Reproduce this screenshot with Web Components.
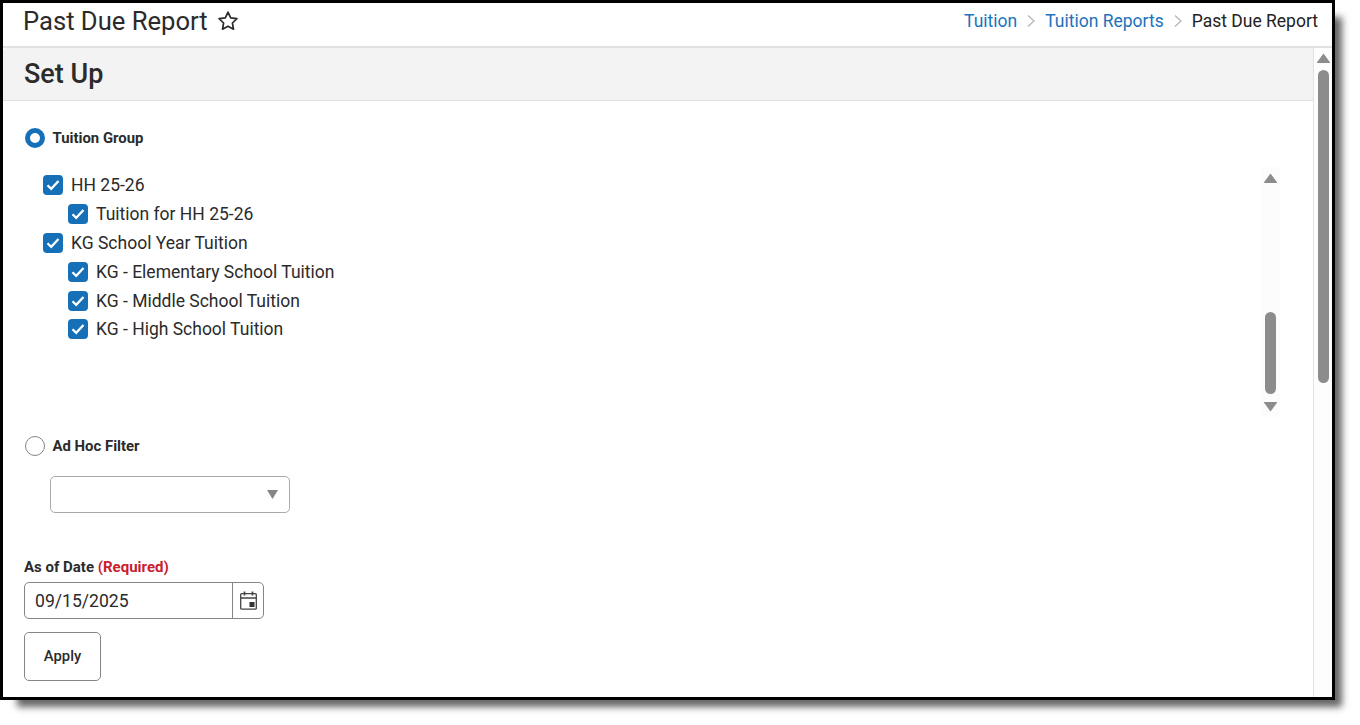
<!DOCTYPE html>
<html>
<head>
<meta charset="utf-8">
<title>Past Due Report</title>
<style>
  html, body { margin: 0; padding: 0; background: #fff; }
  body { min-height: 725px; font-family: Roboto, "Liberation Sans", sans-serif; color: #222; }
</style>
</head>
<body>
<report-frame>
  <page-header slot="header" title-text="Past Due Report">
    <a href="#">Tuition</a>
    <a href="#">Tuition Reports</a>
    <span>Past Due Report</span>
  </page-header>
  <setup-panel slot="main"></setup-panel>
  <scroll-bar slot="scroll" thumb-top="7" thumb-height="313" pad-top="5" track="#fdfdfd"></scroll-bar>
</report-frame>

<script>
// small helper, every component sets its shadow the same way
function mount(el, html) {
    const shadow = el.attachShadow({ mode: 'open' });
    shadow.innerHTML = html;
    return shadow;
}

class ReportFrame extends HTMLElement {
    constructor() {
        super();
        mount(this, `
        <style>
          :host {
            display: flex;
            flex-direction: column;
            box-sizing: border-box;
            width: 1335px;
            height: 700px;
            border: 3px solid #000;
            background: #fff;
            box-shadow: 12px 12px 7px -5px #666;
            overflow: hidden;
          }
          .body {
            display: flex;
            flex: 1;
            min-height: 0;
          }
          .main { flex: 1; min-width: 0; display: flex; border-right: 1px solid #e2e2e2; }
          .scroll { width: 18px; display: flex; }
        </style>
        <slot name="header"></slot>
        <div class="body">
          <div class="main"><slot name="main"></slot></div>
          <div class="scroll"><slot name="scroll"></slot></div>
        </div>
      `);
    }
}

class PageHeader extends HTMLElement {
    constructor() {
        super();
        const title = this.getAttribute('title-text') || '';
        mount(this, `
        <style>
          :host {
            display: flex;
            align-items: center;
            justify-content: space-between;
            box-sizing: border-box;
            height: 45px;
            padding: 0 14px 7px 20px;
            border-bottom: 2px solid #e1e1e1;
          }
          .title { display: flex; align-items: center; gap: 9px; font-size: 25.6px; line-height: 36px; color: #2b2b2b; }
          .title svg { display: block; }
          nav { display: flex; align-items: center; font-size: 17.5px; color: #222; }
          ::slotted(a) { color: #1a73bc; text-decoration: none; }
          .sep { display: flex; width: 28px; justify-content: center; }
        </style>
        <div class="title">
          <span>${title}</span>
          <svg width="22" height="22" viewBox="0 0 22 22" fill="none" stroke="#2b2b2b" stroke-width="1.7" stroke-linejoin="round">
            <path d="M11 2.2l2.7 5.7 6.2.8-4.5 4.3 1.1 6.2L11 16.2l-5.5 3 1.1-6.2-4.5-4.3 6.2-.8z"/>
          </svg>
        </div>
        <nav>
          <slot></slot>
        </nav>
      `);
        // separators go between the slotted crumbs
        const nav = this.shadowRoot.querySelector('nav');
        nav.innerHTML = '';
        [...this.children].forEach((crumb, i) => {
            const name = 'c' + i;
            crumb.slot = name;
            if (i > 0) {
                const sep = document.createElement('span');
                sep.className = 'sep';
                sep.innerHTML = '<svg width="8" height="14" viewBox="0 0 8 14" fill="none" stroke="#b9b9b9" stroke-width="1.5"><path d="M1 1.5L7 7l-6 5.5"/></svg>';
                nav.appendChild(sep);
            }
            const s = document.createElement('slot');
            s.name = name;
            nav.appendChild(s);
        });
    }
}

class ScrollBar extends HTMLElement {
    constructor() {
        super();
        const top = this.getAttribute('thumb-top') || 0;
        const h = this.getAttribute('thumb-height') || 50;
        const pad = this.getAttribute('pad-top') || 0;
        const track = this.getAttribute('track') || '#fdfdfd';
        const hasDown = this.hasAttribute('down');
        mount(this, `
        <style>
          :host {
            display: flex;
            flex-direction: column;
            align-items: center;
            box-sizing: border-box;
            width: 100%;
            padding-top: ${pad}px;
            background: ${track};
          }
          svg { display: block; flex: none; }
          .thumb {
            flex: none;
            width: 11px;
            height: ${h}px;
            margin-top: ${top}px;
            background: #8c8c8c;
            border-radius: 6px;
          }
          .down { margin-top: 8px; }
        </style>
        <svg width="13" height="10" viewBox="0 0 13 10"><path d="M6.5.5L13 9.2q.3.8-.6.8H.6q-.9 0-.6-.8z" fill="#8c8c8c"/></svg>
        <div class="thumb"></div>
        ${hasDown ? '<svg class="down" width="13" height="10" viewBox="0 0 13 10"><path d="M.6 0h11.8q.9 0 .6.8L6.5 9.5 0 .8q-.3-.8.6-.8z" fill="#8c8c8c"/></svg>' : ''}
      `);
    }
}

class RadioOption extends HTMLElement {
    constructor() {
        super();
        const on = this.hasAttribute('checked');
        mount(this, `
        <style>
          :host { display: flex; align-items: center; gap: 7.5px; height: 20px; margin-left: 1px; font-size: 14.9px; font-weight: 700; color: #2b2b2b; }
          .dot { box-sizing: border-box; width: 20px; height: 20px; border-radius: 50%; background: #fff; }
          .on { border: 5px solid #1670b8; }
          .off { border: 1px solid #858585; }
        </style>
        <span class="dot ${on ? 'on' : 'off'}"></span>
        <slot></slot>
      `);
    }
}

class TreeCheck extends HTMLElement {
    constructor() {
        super();
        const child = this.hasAttribute('child');
        mount(this, `
        <style>
          :host {
            display: flex;
            align-items: center;
            gap: 8px;
            height: 28.8px;
            padding-left: ${child ? 25 : 0}px;
            font-size: 17.5px;
            color: #2b2b2b;
          }
          .box {
            display: flex;
            align-items: center;
            justify-content: center;
            width: 20px;
            height: 20px;
            background: #1670b8;
            border-radius: 4px;
          }
        </style>
        <span class="box">
          <svg width="14" height="12" viewBox="0 0 14 12" fill="none" stroke="#fff" stroke-width="2.3"><path d="M1.5 6.2l3.7 3.6L12.5 2"/></svg>
        </span>
        <slot></slot>
      `);
    }
}

class SelectBox extends HTMLElement {
    constructor() {
        super();
        mount(this, `
        <style>
          :host {
            display: flex;
            align-items: center;
            justify-content: flex-end;
            box-sizing: border-box;
            width: 240px;
            height: 37px;
            padding-right: 11px;
            border: 1px solid #aaa;
            border-radius: 5px;
            background: #fff;
          }
        </style>
        <svg width="11" height="9" viewBox="0 0 11 9"><path d="M0 0h11L5.5 9z" fill="#858585"/></svg>
      `);
    }
}

class DateField extends HTMLElement {
    constructor() {
        super();
        const value = this.getAttribute('value') || '';
        mount(this, `
        <style>
          :host {
            display: flex;
            box-sizing: border-box;
            width: 240px;
            height: 37px;
            border: 1px solid #858585;
            border-radius: 5px;
            font-size: 17.6px;
            color: #2b2b2b;
          }
          .val { flex: 1; display: flex; align-items: center; padding-left: 10px; }
          .btn { flex: none; box-sizing: border-box; width: 31px; display: flex; align-items: center; justify-content: center; border-left: 1px solid #858585; }
        </style>
        <span class="val">${value}</span>
        <span class="btn">
          <svg width="17" height="19" viewBox="0 0 17 19" fill="none" stroke="#444" stroke-width="1.3">
            <rect x=".7" y="2.6" width="15.6" height="15.6" rx="1"/>
            <path d="M.7 7h15.6" stroke-width="1.5"/>
            <path d="M4.5 .5v4M12.5 .5v4" stroke-width="1.7"/>
            <rect x="9.5" y="11" width="5" height="5" fill="#333" stroke="none"/>
          </svg>
        </span>
      `);
    }
}

class ApplyButton extends HTMLElement {
    constructor() {
        super();
        mount(this, `
        <style>
          :host {
            display: flex;
            align-items: center;
            justify-content: center;
            box-sizing: border-box;
            width: 77px;
            height: 49px;
            padding-bottom: 2px;
            border: 1px solid #858585;
            border-radius: 5px;
            font-size: 14.8px;
            font-weight: 500;
            color: #2b2b2b;
          }
        </style>
        <slot></slot>
      `);
    }
}

class SetupPanel extends HTMLElement {
    constructor() {
        super();
        mount(this, `
        <style>
          :host { display: block; flex: 1; min-width: 0; }
          .head {
            box-sizing: border-box;
            height: 53px;
            padding-left: 21px;
            background: #f3f3f3;
            border-bottom: 1px solid #e1e1e1;
            border-top-left-radius: 4px;
            font-size: 27px;
            font-weight: 500;
            line-height: 53px;
            color: #2b2b2b;
          }
          .content { padding: 27px 33px 0 21px; }
          .tree-wrap { display: flex; justify-content: space-between; height: 250px; margin-top: 19px; }
          .tree { padding: 4px 0 0 19px; }
          .sb { width: 19px; display: flex; }
          .adhoc { margin-top: 19px; }
          select-box { margin: 20px 0 0 26px; }
          .label { margin-top: 46px; font-size: 15px; font-weight: 700; line-height: 17px; color: #2b2b2b; }
          .req { color: #c8202f; }
          date-field { margin-top: 6px; }
          apply-button { margin-top: 13px; }
        </style>
        <div class="head">Set Up</div>
        <div class="content">
          <radio-option checked>Tuition Group</radio-option>
          <div class="tree-wrap">
            <div class="tree">
              <tree-check>HH 25-26</tree-check>
              <tree-check child>Tuition for HH 25-26</tree-check>
              <tree-check>KG School Year Tuition</tree-check>
              <tree-check child>KG - Elementary School Tuition</tree-check>
              <tree-check child>KG - Middle School Tuition</tree-check>
              <tree-check child>KG - High School Tuition</tree-check>
            </div>
            <div class="sb"><scroll-bar down thumb-top="129" thumb-height="82" pad-top="6" track="#fcfcfc"></scroll-bar></div>
          </div>
          <div class="adhoc"><radio-option>Ad Hoc Filter</radio-option></div>
          <select-box></select-box>
          <div class="label">As of Date <span class="req">(Required)</span></div>
          <date-field value="09/15/2025"></date-field>
          <apply-button>Apply</apply-button>
        </div>
      `);
    }
}

// children first, so the panel's inner tags upgrade straight away
customElements.define('report-frame', ReportFrame);
customElements.define('page-header', PageHeader);
customElements.define('scroll-bar', ScrollBar);
customElements.define('radio-option', RadioOption);
customElements.define('tree-check', TreeCheck);
customElements.define('select-box', SelectBox);
customElements.define('date-field', DateField);
customElements.define('apply-button', ApplyButton);
customElements.define('setup-panel', SetupPanel);
</script>
</body>
</html>
